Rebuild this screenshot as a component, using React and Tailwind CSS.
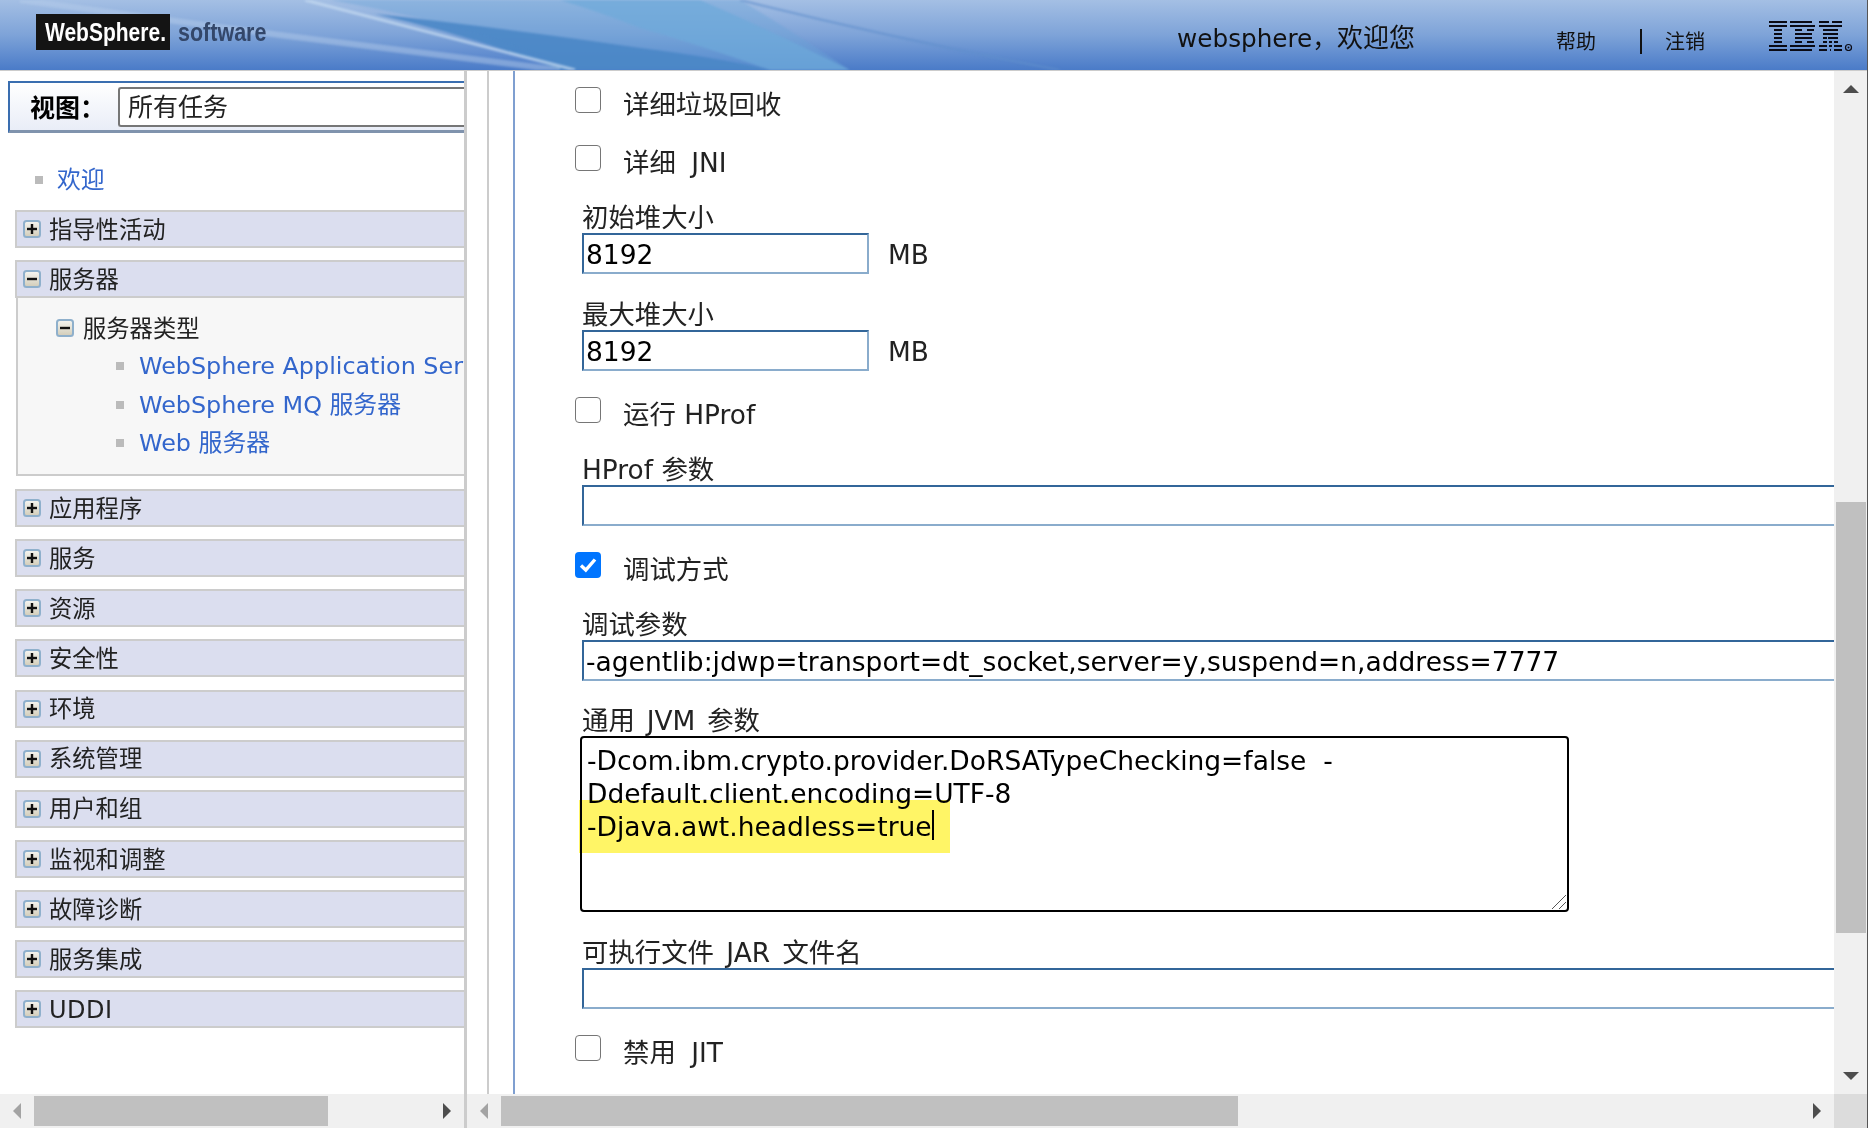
import React from "react";

const sections = ["应用程序", "服务", "资源", "安全性", "环境", "系统管理", "用户和组", "监视和调整", "故障诊断", "服务集成"];
const serverLinks = ["WebSphere Application Server", "WebSphere MQ 服务器", "Web 服务器"];

// IBM 8-bar logo, one list of [x, width] per bar
const ibmBars = [
  [[0, 18], [21, 22], [50, 10], [63, 10]],
  [[0, 18], [21, 25], [50, 12], [61, 12]],
  [[5, 8], [26, 7], [38, 7], [54, 8], [61, 8]],
  [[5, 8], [26, 17], [54, 15]],
  [[5, 8], [26, 17], [54, 4], [59, 5], [64, 5]],
  [[5, 8], [26, 7], [38, 7], [54, 4], [60, 3], [65, 4]],
  [[0, 18], [21, 25], [50, 8], [60, 3], [65, 8]],
  [[0, 18], [21, 22], [50, 8], [61, 1], [65, 8]],
];

function IbmLogo() {
  return (
    <svg width="84" height="30" viewBox="0 0 84 30" className="mt-[2px]">
      {ibmBars.map((bar, i) =>
        bar.map(([x, w]) => <rect key={`${i}-${x}`} x={x} y={i * 4} width={w} height="2" fill="#0a0a14" />)
      )}
      <circle cx="79.5" cy="26.5" r="3" fill="none" stroke="#0a0a14" strokeWidth="1.2" />
      <circle cx="79.5" cy="26.5" r="1" fill="#0a0a14" />
    </svg>
  );
}

function HeaderWaves() {
  return (
    <svg className="absolute inset-0 blur-[1px]" width="1868" height="70" viewBox="0 0 1868 70" preserveAspectRatio="none">
      <path d="M470 0 L740 0 Q790 30 850 70 L570 70 Q500 30 330 0 Z" fill="#6aa2d6" opacity="0.4" />
      <path d="M375 14 Q520 30 640 48 Q720 58 770 70 L560 70 Q470 35 375 14 Z" fill="#4a87c6" opacity="0.9" />
      <path d="M560 0 L700 0 Q770 30 850 70 L770 70 Q700 45 640 28 Q600 12 560 0 Z" fill="#6eaada" opacity="0.7" />
      <path d="M305 0 Q420 30 575 70" fill="none" stroke="#c4daf0" strokeWidth="3" opacity="0.75" />
      <path d="M20 0 Q170 20 280 35 Q440 55 560 70" fill="none" stroke="#b7cfeb" strokeWidth="6" opacity="0.45" />
      <path d="M740 0 Q900 40 1060 70" fill="none" stroke="#5f8fcc" strokeWidth="2" opacity="0.7" />
    </svg>
  );
}

function TreeIcon({ open }) {
  return (
    <svg width="18" height="18" viewBox="0 0 18 18" className="shrink-0">
      <defs>
        <linearGradient id={open ? "iconOpen" : "iconClosed"} x1="0" y1="0" x2="0" y2="1">
          <stop offset="0" stopColor="#f6f6f2" />
          <stop offset="1" stopColor="#d2ccb8" />
        </linearGradient>
      </defs>
      <rect x="1" y="1" width="16" height="16" rx="2.5" fill={`url(#${open ? "iconOpen" : "iconClosed"})`} stroke="#8fb0cc" strokeWidth="2" />
      <path d="M4 9 H14" stroke="#111111" strokeWidth="2.4" />
      {!open && <path d="M9 4 V14" stroke="#111111" strokeWidth="2.4" />}
    </svg>
  );
}

function SectionRow({ label, open, className, labelClass = "text-[23.3px]" }) {
  return (
    <div className={`ml-[15px] h-[38px] flex items-center gap-[8px] pl-[6px] bg-[#dbdeef] border-t-2 border-l-2 border-b-2 border-[#cccccc] text-[#222222] ${className}`}>
      <TreeIcon open={open} />
      <span className={`pt-[2px] ${labelClass}`}>{label}</span>
    </div>
  );
}

function Bullet() {
  return <span className="w-[8px] h-[8px] bg-[#bbbbbb] shrink-0" />;
}

function Triangle({ dir, color }) {
  const points = {
    up: "0,8 8,0 16,8",
    down: "0,0 16,0 8,8",
    left: "8,0 8,16 0,8",
    right: "0,0 8,8 0,16",
  }[dir];
  const vertical = dir === "up" || dir === "down";
  return (
    <svg width={vertical ? 16 : 8} height={vertical ? 8 : 16} className="shrink-0">
      <polygon points={points} fill={color} />
    </svg>
  );
}

function Check({ label, checked, labelClass = "" }) {
  return (
    <div className="mt-[26px] first:mt-[16px] ml-[60px] h-[32px] flex items-start gap-[22px] text-[26.4px] leading-[32px] text-[#222222]">
      {checked ? (
        <span className="w-[26px] h-[26px] rounded-[4px] bg-[#0075ff] flex items-center justify-center shrink-0">
          <svg width="18" height="16" viewBox="0 0 18 16">
            <path d="M2 8.5 L6.8 13 L16 2.5" fill="none" stroke="#ffffff" strokeWidth="3.4" />
          </svg>
        </span>
      ) : (
        <span className="w-[26px] h-[26px] rounded-[4px] bg-white border border-[#767676] shrink-0" />
      )}
      <span className={`mt-[2px] ${labelClass}`}>{label}</span>
    </div>
  );
}

function Field({ label, value = "", unit, narrow, labelClass = "" }) {
  return (
    <div className="mt-[26px] ml-[67px]">
      <div className={`h-[30px] text-[26.4px] leading-[30px] whitespace-nowrap text-[#222222] ${labelClass}`}>{label}</div>
      <div className="h-[41px] flex items-center">
        <input
          readOnly
          value={value}
          className={`${narrow ? "w-[287px]" : "w-[1300px]"} h-[41px] pl-[2px] pt-[2px] shrink-0 text-[26.5px] text-black outline-none bg-white border-2 border-t-[#336699] border-l-[#336699] border-r-[#8aaccc] border-b-[#8aaccc]`}
        />
        {unit && <span className="ml-[19px] mt-[3px] text-[26.4px] text-[#222222]">{unit}</span>}
      </div>
    </div>
  );
}

export default function App() {
  return (
    <div className="w-[1868px] h-[1128px] flex flex-col overflow-hidden bg-white border-r border-[#555555] font-['DejaVu_Sans','Noto_Sans_CJK_SC',sans-serif]">
      <header className="relative h-[71px] shrink-0 border-b border-[#cccccc] flex items-center bg-gradient-to-b from-[#a4bfe4] via-[#7ea3d8] to-[#4a7bc8] overflow-hidden">
        <HeaderWaves />
        <div className="relative ml-[36px] mb-[6px] w-[134px] h-[36px] bg-[#141414] flex items-center overflow-hidden">
          <span className="block ml-[9px] origin-left scale-x-[0.84] text-white font-bold text-[25px] leading-none whitespace-nowrap blur-[0.4px] font-['Liberation_Sans',sans-serif]">WebSphere.</span>
        </div>
        <span className="relative block ml-[8px] mb-[6px] origin-left scale-x-[0.86] text-[#33476a] font-bold text-[25px] leading-none blur-[0.4px] font-['Liberation_Sans',sans-serif]">software</span>
        <div className="relative ml-auto mr-[14px] h-[40px] flex items-center">
          <span className="mt-[7px] mr-[141px] text-[26px] text-[#111111]">
            <span className="text-[24.7px]">websphere，</span>欢迎您
          </span>
          <span className="mt-[13px] text-[20px] text-[#111111]">帮助</span>
          <span className="mt-[13px] ml-[44px] mr-[23px] w-[2px] h-[25px] bg-[#111111]" />
          <span className="mt-[13px] text-[20px] text-[#111111] mr-[64px]">注销</span>
          <IbmLogo />
        </div>
      </header>

      <main className="flex-1 min-h-0 flex">
        <aside className="w-[464px] shrink-0 flex flex-col">
          <div className="flex-1 min-h-0 overflow-hidden">
            <div className="mt-[10px] ml-[8px] h-[52px] flex items-center pl-[20px] border-t-2 border-l-2 border-b-[3px] border-t-[#3a6eb0] border-l-[#3a6eb0] border-b-[#8093ad] bg-gradient-to-b from-[#ffffff] to-[#e9edf7]">
              <span className="w-[88px] pt-[5px] text-[25px] font-bold text-black shrink-0">视图：</span>
              <div className="h-[40px] flex-1 flex items-center pl-[8px] pt-[3px] bg-white border-2 border-r-0 border-[#767676] rounded-l-[3px] text-[25px] text-[#222222]">所有任务</div>
            </div>

            <div className="mt-[31px] ml-[35px] h-[32px] flex items-center gap-[14px]">
              <Bullet />
              <span className="pt-[2px] text-[23.8px] text-[#3366cc]">欢迎</span>
            </div>

            <SectionRow label="指导性活动" className="mt-[14px] mb-[12px]" />
            <SectionRow label="服务器" open />
            <div className="ml-[16px] h-[178px] bg-[#f7f7f7] border-l-2 border-b-2 border-[#cccccc] mb-[13px] overflow-hidden">
              <div className="mt-[14px] ml-[38px] h-[32px] flex items-center gap-[9px] text-[23.3px] text-[#222222]">
                <TreeIcon open />
                <span className="pt-[2px]">服务器类型</span>
              </div>
              <div className="mt-[3px]">
                {serverLinks.map((link) => (
                  <div key={link} className="ml-[98px] h-[38.5px] flex items-center gap-[15px] whitespace-nowrap text-[23.85px] text-[#3366cc]">
                    <Bullet />
                    <span className="pt-[2px]">{link}</span>
                  </div>
                ))}
              </div>
            </div>
            {sections.map((label) => (
              <SectionRow key={label} label={label} className="mb-[12.15px]" />
            ))}
            <SectionRow label="UDDI" labelClass="text-[24px] tracking-[0.5px]" />
          </div>

          <div className="h-[34px] shrink-0 bg-[#f0f0f0] flex items-center pl-[13px]">
            <Triangle dir="left" color="#a3a3a3" />
            <div className="ml-[13px] w-[294px] h-[30px] bg-[#c0c0c0]" />
            <div className="ml-auto mr-[13px]">
              <Triangle dir="right" color="#4d4d4d" />
            </div>
          </div>
        </aside>

        <div className="w-[3px] shrink-0 bg-[#cccccc]" />

        <div className="flex-1 min-w-0 flex flex-col">
          <div className="flex-1 min-h-0 flex">
            <div className="flex-1 min-w-0 overflow-hidden pl-[20px]">
              <div className="h-full border-l-2 border-[#cccccc] pl-[24px]">
                <div className="h-full border-l-2 border-[#7f9fd0] overflow-hidden">
                  <Check label="详细垃圾回收" />
                  <Check label="详细 JNI" labelClass="[word-spacing:7px]" />
                  <Field label="初始堆大小" value="8192" unit="MB" narrow />
                  <Field label="最大堆大小" value="8192" unit="MB" narrow />
                  <Check label="运行 HProf" />
                  <Field label="HProf 参数" />
                  <Check label="调试方式" checked />
                  <Field label="调试参数" value="-agentlib:jdwp=transport=dt_socket,server=y,suspend=n,address=7777" />
                  <div className="mt-[25px] ml-[65px]">
                    <div className="ml-[2px] h-[30px] text-[26.4px] leading-[30px] text-[#222222] [word-spacing:3.5px]">通用 JVM 参数</div>
                    <div className="relative w-[989px] h-[176px]">
                      <textarea
                        readOnly
                        wrap="off"
                        value={"-Dcom.ibm.crypto.provider.DoRSATypeChecking=false  -\nDdefault.client.encoding=UTF-8\n-Djava.awt.headless=true"}
                        className="block w-full h-full pl-[5px] pt-[6px] text-[26.5px] leading-[33px] text-black bg-white border-2 border-black rounded-[4px] outline-none overflow-hidden resize-none"
                      />
                      <div className="absolute left-[-1px] top-[64px] w-[371px] h-[53px] bg-[#fff566] mix-blend-multiply" />
                      <div className="absolute left-[352px] top-[74px] w-[2px] h-[30px] bg-black" />
                      <svg className="absolute right-[2px] bottom-[2px]" width="16" height="16" viewBox="0 0 16 16">
                        <path d="M1 15 L15 1 M8 15 L15 8" stroke="#555555" strokeWidth="1" fill="none" />
                      </svg>
                    </div>
                  </div>
                  <Field label="可执行文件 JAR 文件名" labelClass="[word-spacing:4px]" />
                  <Check label="禁用 JIT" labelClass="[word-spacing:7px]" />
                </div>
              </div>
            </div>
            <div className="w-[33px] shrink-0 bg-[#f0f0f0] flex flex-col items-center">
              <div className="mt-[14px]">
                <Triangle dir="up" color="#4d4d4d" />
              </div>
              <div className="mt-[409px] w-[30px] h-[431px] bg-[#c0c0c0]" />
              <div className="mt-auto mb-[14px] flex">
                <Triangle dir="down" color="#4d4d4d" />
              </div>
            </div>
          </div>

          <div className="h-[34px] shrink-0 flex">
            <div className="flex-1 bg-[#f0f0f0] flex items-center pl-[13px]">
              <Triangle dir="left" color="#a3a3a3" />
              <div className="ml-[13px] w-[737px] h-[30px] bg-[#c0c0c0]" />
              <div className="ml-auto mr-[13px]">
                <Triangle dir="right" color="#4d4d4d" />
              </div>
            </div>
            <div className="w-[33px] bg-[#dcdcdc]" />
          </div>
        </div>
      </main>
    </div>
  );
}
